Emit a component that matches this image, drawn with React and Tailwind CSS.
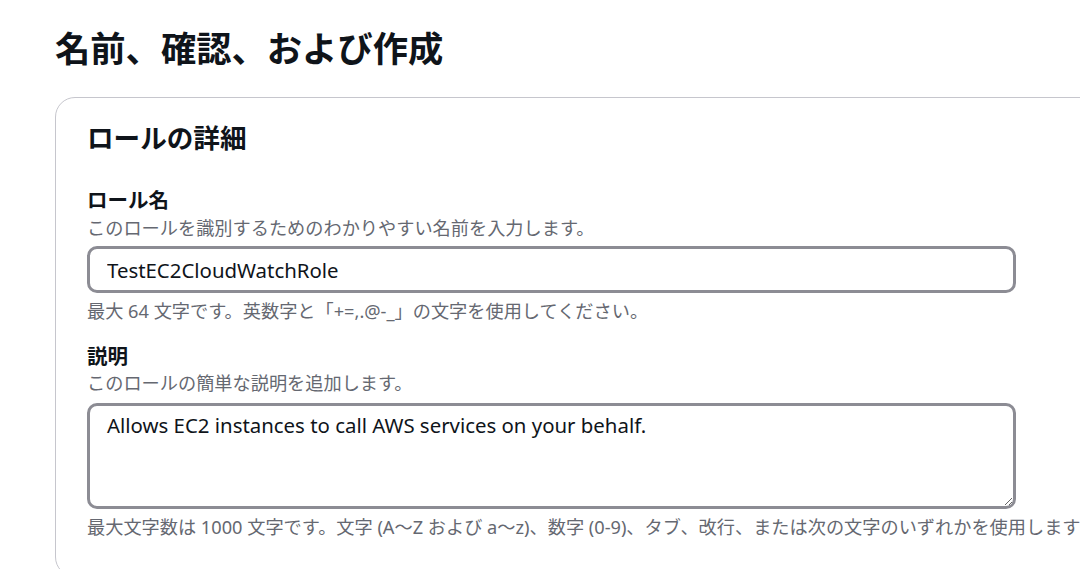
import React from "react";

export default function App() {
    const font = { fontFamily: '"Noto Sans", "Noto Sans CJK JP", sans-serif' };

    return (
        <div className="w-[1080px] h-[569px] overflow-hidden bg-white pl-[55px] pt-[26px] text-[#0f141a]" style={font}>
            <h1 className="text-[35.3px] leading-[44px] font-bold whitespace-nowrap">名前、確認、および作成</h1>

            <div className="mt-[27px] w-[1100px] h-[480px] border border-[#c6c6cd] rounded-[20px] px-[31px] pt-[23px]">
                <h2 className="text-[26.6px] leading-[34px] font-bold">ロールの詳細</h2>

                {/* role name */}
                <div className="mt-[32px]">
                    <label className="block text-[20.5px] leading-[26px] font-bold">ロール名</label>
                    <p className="mt-[2px] text-[18.2px] leading-[26px] text-[#656871]">このロールを識別するためのわかりやすい名前を入力します。</p>
                    <input
                        className="mt-[5px] w-[929px] h-[47px] border-[3px] border-[#8c8c94] rounded-[10px] px-[17px] text-[20.4px] text-[#0f141a] outline-none"
                        defaultValue="TestEC2CloudWatchRole"
                        style={font}
                    />
                    <p className="mt-[5px] text-[18.2px] leading-[26px] text-[#656871]">最大 64 文字です。英数字と「+=,.@-_」の文字を使用してください。</p>
                </div>

                {/* description */}
                <div className="mt-[19px]">
                    <label className="block text-[20.5px] leading-[26px] font-bold">説明</label>
                    <p className="mt-[1px] text-[18.2px] leading-[26px] text-[#656871]">このロールの簡単な説明を追加します。</p>
                    <textarea
                        className="block mt-[7px] w-[929px] h-[106px] border-[3px] border-[#8c8c94] rounded-[10px] px-[17px] pt-[5px] text-[20.4px] leading-[28px] text-[#0f141a] outline-none"
                        defaultValue="Allows EC2 instances to call AWS services on your behalf."
                        style={font}
                    />
                    <p className="mt-[5px] text-[18.2px] leading-[26px] text-[#656871] whitespace-nowrap">最大文字数は 1000 文字です。文字 (A〜Z および a〜z)、数字 (0-9)、タブ、改行、または次の文字のいずれかを使用します</p>
                </div>
            </div>
        </div>
    );
}
